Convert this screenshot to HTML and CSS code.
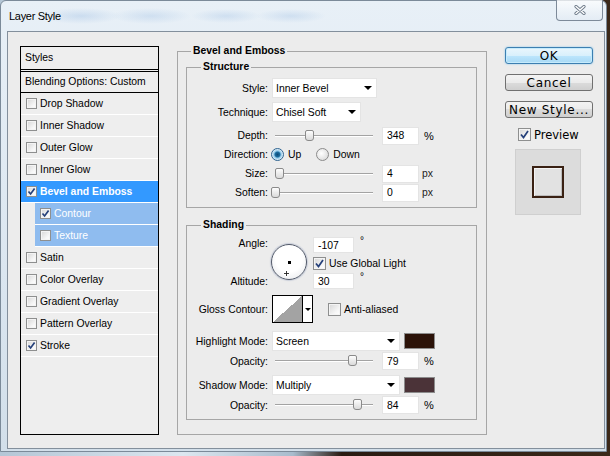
FILE: index.html
```html
<!DOCTYPE html>
<html>
<head>
    <meta charset="UTF-8">
    <title>Layer Style</title>
    <link rel="stylesheet" href="styles.css">
</head>
<body>
<div class="window">
    <div class="titlebar">
        <span class="title">Layer Style</span>
        <span class="close">
            <svg width="12" height="10" viewBox="0 0 12 10">
                <path d="M2 1.5 L10 8.5 M10 1.5 L2 8.5" stroke="#6e7b8a" stroke-width="3.2" stroke-linecap="round"/>
                <path d="M2 1.5 L10 8.5 M10 1.5 L2 8.5" stroke="#fff" stroke-width="1.4" stroke-linecap="round"/>
            </svg>
        </span>
    </div>

    <div class="client">
        <!-- список эффектов -->
        <div class="styles-list">
            <div class="list-head">Styles</div>
            <div class="list-blend">Blending Options: Custom</div>
            <div class="list-row"><span class="cb"></span>Drop Shadow</div>
            <div class="list-row"><span class="cb"></span>Inner Shadow</div>
            <div class="list-row"><span class="cb"></span>Outer Glow</div>
            <div class="list-row"><span class="cb"></span>Inner Glow</div>
            <div class="list-row active"><span class="cb on"><svg viewBox="0 0 9 9"><path d="M1.5 4.5 L3.6 7 L7.6 1.6"/></svg></span>Bevel and Emboss</div>
            <div class="list-row sub"><span class="cb on"><svg viewBox="0 0 9 9"><path d="M1.5 4.5 L3.6 7 L7.6 1.6"/></svg></span>Contour</div>
            <div class="list-row sub"><span class="cb"></span>Texture</div>
            <div class="list-row"><span class="cb"></span>Satin</div>
            <div class="list-row"><span class="cb"></span>Color Overlay</div>
            <div class="list-row"><span class="cb"></span>Gradient Overlay</div>
            <div class="list-row"><span class="cb"></span>Pattern Overlay</div>
            <div class="list-row"><span class="cb on"><svg viewBox="0 0 9 9"><path d="M1.5 4.5 L3.6 7 L7.6 1.6"/></svg></span>Stroke</div>
        </div>

        <!-- настройки тиснения -->
        <fieldset class="group main">
            <legend class="main-legend">Bevel and Emboss</legend>
            <div class="main-body">
                <fieldset class="group">
                    <legend>Structure</legend>
                    <div class="structure-body">
                        <div class="row tall">
                            <span class="lbl">Style:</span>
                            <div class="select style-sel">Inner Bevel<i class="arrow"></i></div>
                        </div>
                        <div class="row tall">
                            <span class="lbl">Technique:</span>
                            <div class="select tech-sel">Chisel Soft<i class="arrow"></i></div>
                        </div>
                        <div class="row">
                            <span class="lbl">Depth:</span>
                            <div class="slider"><div class="track"><span class="thumb" style="left: 34.8%"></span></div></div>
                            <input class="num" type="text" value="348">
                            <span class="unit">%</span>
                        </div>
                        <div class="row">
                            <span class="lbl">Direction:</span>
                            <span class="radio on"></span><span class="radio-text">Up</span>
                            <span class="radio second"></span><span class="radio-text">Down</span>
                        </div>
                        <div class="row">
                            <span class="lbl">Size:</span>
                            <div class="slider"><div class="track"><span class="thumb" style="left: 4.5%"></span></div></div>
                            <input class="num" type="text" value="4">
                            <span class="unit px">px</span>
                        </div>
                        <div class="row">
                            <span class="lbl">Soften:</span>
                            <div class="slider"><div class="track"><span class="thumb" style="left: 0.5%"></span></div></div>
                            <input class="num" type="text" value="0">
                            <span class="unit px">px</span>
                        </div>
                    </div>
                </fieldset>

                <fieldset class="group shading">
                    <legend>Shading</legend>
                    <div class="shading-body">
                        <div class="angle-block">
                            <div class="angle-labels">
                                <span class="lbl angle-lbl">Angle:</span>
                                <span class="lbl alt-lbl">Altitude:</span>
                            </div>
                            <div class="dial">
                                <span class="dial-dot"></span>
                                <svg class="cursor" width="7" height="7" viewBox="0 0 7 7">
                                    <path d="M3.5 0.5 V6.5 M0.5 3.5 H6.5" stroke="#fff" stroke-width="2.4"/>
                                    <path d="M3.5 1 V6 M1 3.5 H6" stroke="#222" stroke-width="0.9"/>
                                </svg>
                            </div>
                            <div class="angle-fields">
                                <div class="deg-row"><input class="num deg" type="text" value="-107"><span class="degree">°</span></div>
                                <div class="chk-row"><span class="cb big on"><svg viewBox="0 0 11 11"><path d="M2 5.5 L4.5 8.5 L9 2"/></svg></span>Use Global Light</div>
                                <div class="deg-row"><input class="num deg" type="text" value="30"><span class="degree">°</span></div>
                            </div>
                        </div>

                        <div class="row contour-row">
                            <span class="lbl">Gloss Contour:</span>
                            <div class="contour">
                                <span class="contour-curve"></span>
                                <span class="contour-drop"><i class="arrow small"></i></span>
                            </div>
                            <span class="cb big anti"></span><span>Anti-aliased</span>
                        </div>

                        <div class="row mode-row">
                            <span class="lbl">Highlight Mode:</span>
                            <div class="select mode-sel">Screen<i class="arrow"></i></div>
                            <span class="swatch highlight"></span>
                        </div>
                        <div class="row op-row">
                            <span class="lbl">Opacity:</span>
                            <div class="slider"><div class="track"><span class="thumb" style="left: 79%"></span></div></div>
                            <input class="num" type="text" value="79">
                            <span class="unit">%</span>
                        </div>
                        <div class="row mode-row second-mode">
                            <span class="lbl">Shadow Mode:</span>
                            <div class="select mode-sel">Multiply<i class="arrow"></i></div>
                            <span class="swatch shadow"></span>
                        </div>
                        <div class="row op-row">
                            <span class="lbl">Opacity:</span>
                            <div class="slider"><div class="track"><span class="thumb" style="left: 84%"></span></div></div>
                            <input class="num" type="text" value="84">
                            <span class="unit">%</span>
                        </div>
                    </div>
                </fieldset>
            </div>
        </fieldset>

        <!-- кнопки справа -->
        <div class="actions">
            <button class="btn default">OK</button>
            <button class="btn">Cancel</button>
            <button class="btn">New Style...</button>
            <div class="preview-row"><span class="cb big on"><svg viewBox="0 0 11 11"><path d="M2 5.5 L4.5 8.5 L9 2"/></svg></span>Preview</div>
            <div class="preview-box"><span class="preview-square"></span></div>
        </div>
    </div>
</div>
</body>
</html>
```

FILE: styles.css
```css
* {
    box-sizing: border-box;
}

body {
    margin: 0;
    width: 610px;
    height: 456px;
    overflow: hidden;
    background: linear-gradient(to right, #b4c6d6 0, #dce7f0 30%, #a8bccd 48%, #2a1b12 56%, #3b2819 100%);
    font-family: "Liberation Sans", Arial, sans-serif;
    font-size: 10.4px;
    color: #000;
}

/* окно */
.window {
    width: 607px;
    height: 452px;
    padding: 0 1px 2px 6px;
    border: 1px solid #7b8a99;
    border-radius: 6px 6px 0 0;
    background:
        radial-gradient(ellipse 40px 8px at 80px 15px, rgba(150, 185, 225, .35), transparent),
        radial-gradient(ellipse 40px 8px at 150px 15px, rgba(150, 185, 225, .3), transparent),
        radial-gradient(ellipse 35px 7px at 225px 15px, rgba(150, 185, 225, .3), transparent),
        radial-gradient(ellipse 35px 7px at 290px 15px, rgba(150, 185, 225, .3), transparent),
        linear-gradient(#e8f0f7, #dbe6f0 60%, #d2dfea);
    display: flex;
    flex-direction: column;
}

.titlebar {
    height: 30px;
    display: flex;
    justify-content: space-between;
    align-items: flex-start;
}

.title {
    padding: 8px 0 0 2px;
    font-size: 11px;
    letter-spacing: -0.3px;
    line-height: 14px;
}

.close {
    width: 47px;
    height: 21px;
    margin: -1px 2px 0 0;
    border: 1px solid #7d8a99;
    border-top: none;
    border-radius: 0 0 4px 4px;
    background: linear-gradient(rgba(255, 255, 255, .75), rgba(225, 234, 243, .6));
    display: flex;
    align-items: center;
    justify-content: center;
}

.client {
    height: 418px;
    border: 1px solid #838f9c;
    background: #ececec;
    display: flex;
    align-items: flex-start;
}

/* левая панель */
.styles-list {
    flex: none;
    width: 139px;
    height: 389px;
    margin: 14px 0 0 12px;
    border: 1px solid #000;
    background: #eeeeee;
}

.list-head {
    height: 25px;
    line-height: 22px;
    padding-left: 4px;
    border-bottom: 3px double #000;
}

.list-blend {
    height: 21px;
    line-height: 20px;
    padding-left: 4px;
    border-bottom: 1px solid #000;
}

.list-row {
    height: 22px;
    padding-left: 5px;
    border-bottom: 1px solid #fff;
    display: flex;
    align-items: center;
}

.list-row.active {
    background: #3399ff;
    color: #fff;
    font-weight: bold;
}

.list-row.sub {
    margin-left: 14px;
    background: #8fbcef;
    color: #fff;
}

/* чекбоксы */
.cb {
    flex: none;
    width: 11px;
    height: 11px;
    margin-right: 3px;
    border: 1px solid #8e8f8f;
    background: linear-gradient(135deg, #d6d6d6, #f7f7f7 70%, #fff);
    box-shadow: inset 0 0 0 1px #f4f4f4;
    display: flex;
}

.cb.big {
    width: 13px;
    height: 13px;
}

.cb svg {
    width: 100%;
    height: 100%;
}

.cb path {
    fill: none;
    stroke: #25407a;
    stroke-width: 1.7;
}

/* группы */
.group {
    margin: 0;
    padding: 0;
    min-width: 0;
    border: 1px solid #a6a6a6;
}

.group legend {
    margin-left: 14px;
    padding: 0 2px;
    font-weight: bold;
    line-height: 12px;
}

.group legend.main-legend {
    margin-left: 13px;
}

.main {
    flex: none;
    width: 310px;
    margin: 13px 0 0 18px;
}

.main-body {
    padding: 4px 9px 14px 8px;
}

.structure-body {
    padding: 5px 0 5px 0;
}

.shading {
    margin-top: 11px;
}

.shading-body {
    padding: 6px 0 4px 0;
}

.row {
    height: 19px;
    display: flex;
    align-items: center;
}

.row.tall {
    height: 20px;
    margin-bottom: 4px;
}

.lbl {
    flex: none;
    width: 81px;
    text-align: right;
}

.select {
    height: 20px;
    margin-left: 4px;
    padding: 0 4px 0 3px;
    border: 1px solid #e4e4e4;
    background: #fff;
    display: flex;
    align-items: center;
    justify-content: space-between;
}

.style-sel {
    width: 105px;
}

.tech-sel {
    width: 89px;
}

.mode-sel {
    width: 128px;
}

.arrow {
    width: 0;
    height: 0;
    border-left: 4px solid transparent;
    border-right: 4px solid transparent;
    border-top: 4px solid #000;
}

.arrow.small {
    border-left-width: 3px;
    border-right-width: 3px;
    border-top-width: 3px;
}

/* ползунки */
.slider {
    flex: none;
    width: 104px;
    height: 13px;
    margin-left: 4px;
    padding: 0 3px;
    display: flex;
    align-items: center;
}

.track {
    flex: 1;
    height: 2px;
    position: relative;
    border-top: 1px solid #a3a3a3;
    border-bottom: 1px solid #fff;
}

.thumb {
    position: absolute;
    top: -6px;
    width: 9px;
    height: 11px;
    margin-left: -4px;
    border: 1px solid #8a8a8a;
    border-radius: 2px 2px 3px 3px;
    background: linear-gradient(#fdfdfd, #dadada);
}

.num {
    flex: none;
    width: 37px;
    height: 18px;
    margin: 0 0 0 6px;
    padding: 0 0 0 4px;
    border: 1px solid #e4e4e4;
    background: #fff;
    font: inherit;
    color: #000;
    outline: none;
}

.unit {
    margin-left: 5px;
    font-size: 11px;
}

.unit.px {
    margin-left: 3px;
    font-size: 10.4px;
    color: #222;
}

/* радиокнопки */
.radio {
    flex: none;
    width: 13px;
    height: 13px;
    margin-left: 3px;
    border: 1px solid #8b8b8b;
    border-radius: 50%;
    background: radial-gradient(circle at 40% 40%, #fff, #d3d3d3);
}

.radio.on {
    border-color: #2d6390;
    background: radial-gradient(circle, #0c4a78 0, #1d6d9f 2.5px, #8cc6e8 3.5px, #e4f1f9 5.5px);
}

.radio.second {
    margin-left: 15px;
}

.radio-text {
    margin-left: 4px;
}

/* угол */
.angle-block {
    height: 53px;
    display: flex;
}

.angle-labels {
    flex: none;
    width: 81px;
    display: flex;
    flex-direction: column;
    justify-content: space-between;
}

.angle-lbl {
    line-height: 13px;
}

.alt-lbl {
    line-height: 17px;
}

.dial {
    flex: none;
    position: relative;
    width: 36px;
    height: 36px;
    margin: 7px 0 0 3px;
    border: 1.5px solid #525a6a;
    border-radius: 50%;
    background: radial-gradient(circle at 50% 40%, #fff 50%, #e2e4e8);
    box-shadow: 0 0 1px 1px #c9ceda;
    display: flex;
    align-items: center;
    justify-content: center;
}

.dial-dot {
    width: 3px;
    height: 3px;
    background: #000;
}

.cursor {
    position: absolute;
    left: 11px;
    top: 25px;
}

.angle-fields {
    margin-left: 6px;
    display: flex;
    flex-direction: column;
}

.deg-row {
    height: 17px;
    display: flex;
    align-items: flex-start;
}

.num.deg {
    width: 41px;
    height: 16px;
    margin-left: 0;
}

.degree {
    margin-left: 6px;
    font-size: 10px;
    line-height: 8px;
}

.chk-row {
    height: 19px;
    display: flex;
    align-items: center;
}

/* контур */
.contour-row {
    height: 28px;
    margin-top: 5px;
}

.contour {
    flex: none;
    width: 41px;
    height: 28px;
    margin-left: 4px;
    border: 1px solid #000;
    display: flex;
}

.contour-curve {
    flex: 1;
    background: linear-gradient(to bottom right, #fff 50%, #a3a3a3 50%);
}

.contour-drop {
    width: 10px;
    border-left: 1px solid #000;
    background: #fff;
    display: flex;
    align-items: center;
    justify-content: center;
}

.cb.anti {
    margin-left: 15px;
}

.mode-row {
    height: 20px;
    margin-top: 8px;
}

.mode-row.second-mode {
    margin-top: 4px;
}

.op-row {
    height: 20px;
}

.swatch {
    width: 31px;
    height: 16px;
    margin-left: 4px;
    border: 1px solid #8c8c8c;
}

.swatch.highlight {
    background: #2b1208;
}

.swatch.shadow {
    background: #4b3338;
}

/* правая колонка */
.actions {
    flex: none;
    width: 88px;
    margin: 15px 0 0 18px;
    display: flex;
    flex-direction: column;
}

.btn {
    height: 17px;
    margin: 0 0 10px 0;
    padding: 0;
    border: 1px solid #707070;
    border-radius: 3px;
    background: linear-gradient(#f3f3f3 0, #ebebeb 50%, #dcdcdc 50%, #cfcfcf 100%);
    font-family: "DejaVu Sans", sans-serif;
    font-size: 12px;
    letter-spacing: 0.7px;
    line-height: 14px;
    color: #000;
}

.btn.default {
    border-color: #3c7fb1;
    background: linear-gradient(#eaf6fd 0, #d9f0fc 50%, #bee6fd 50%, #a7d9f5 100%);
    box-shadow: inset 0 0 0 1px #c6ebfc, 0 0 2px #7fc3ec;
}

.preview-row {
    height: 13px;
    display: flex;
    align-items: center;
    padding-left: 13px;
    font-family: "DejaVu Sans", sans-serif;
    font-size: 11.5px;
}

.preview-box {
    width: 66px;
    height: 66px;
    margin: 8px 0 0 10px;
    border: 1px solid #cfcfcf;
    background: #dcdcdc;
    display: flex;
    align-items: center;
    justify-content: center;
}

.preview-square {
    width: 32px;
    height: 32px;
    border: 2px solid #3a2113;
    background: #e2e2e2;
    box-shadow: inset 1px 1px 0 #f4f4f4, inset -1px -1px 0 #bcbcbc;
}
```
